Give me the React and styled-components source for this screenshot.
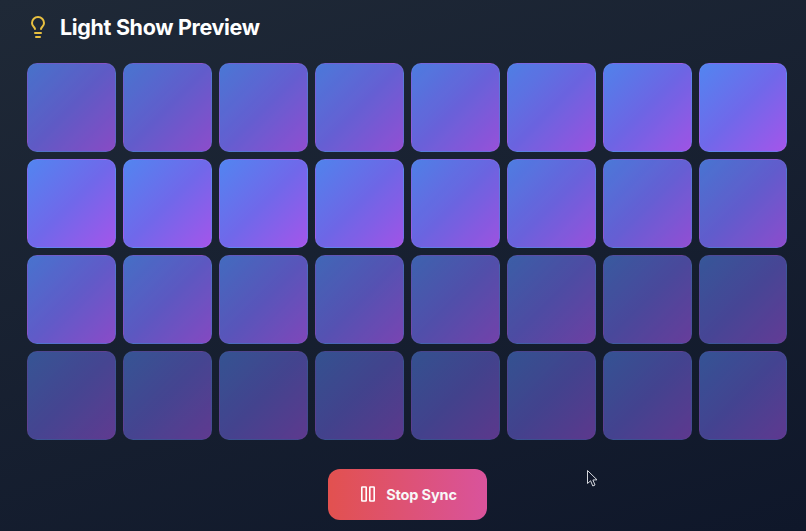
import React from 'react';
import styled, { createGlobalStyle } from 'styled-components';
import { Lightbulb } from 'lucide-react';

const Global = createGlobalStyle`
  html, body { margin: 0; padding: 0; height: 100%; background: #0f172a; }
  #root { height: 100%; }
`;

const Page = styled.main`
  position: relative;
  width: 806px;
  height: 531px;
  overflow: hidden;
  box-sizing: border-box;
  padding: 12px 18px 11px 27px;
  display: flex;
  flex-direction: column;
  background: linear-gradient(162deg, #1f2937 0%, #0f172a 100%);
  font-family: Inter, "Liberation Sans", sans-serif;
`;

const Header = styled.header`
  display: flex;
  align-items: center;
  gap: 10px;
  height: 30px;
  margin-bottom: 21px;
  color: #e8c040;
`;

const BulbIcon = styled(Lightbulb)`
  margin-left: -1px;
`;

const Title = styled.h1`
  margin: 0;
  font-size: 21.5px;
  line-height: 30px;
  font-weight: 700;
  letter-spacing: -0.34px;
  color: #ffffff;
`;

const Grid = styled.div`
  display: grid;
  grid-template-columns: repeat(8, 88.6px);
  grid-auto-rows: 88.6px;
  gap: 7.4px;
`;

const Tile = styled.div`
  box-sizing: border-box;
  border-radius: 10px;
  border: 1px solid rgba(255, 255, 255, 0.05);
  background: linear-gradient(135deg, #5285f0 0%, #7068ea 50%, #a455ea 100%);
`;

const Footer = styled.footer`
  display: flex;
  justify-content: center;
  margin-top: 29px;
`;

const SyncButton = styled.button`
  width: 159px;
  height: 51px;
  border: 0;
  border-radius: 12px;
  display: flex;
  align-items: center;
  justify-content: center;
  gap: 11px;
  padding: 0 0 0 3px;
  background: linear-gradient(90deg, #e2514f 0%, #d9539c 100%);
  color: #f8f8f8;
  font-family: inherit;
  font-size: 14.5px;
  font-weight: 700;
  letter-spacing: -0.15px;
`;

const Cursor = styled.svg`
  position: absolute;
  left: 586px;
  top: 469px;
`;

const levels = [
  0.8, 0.83, 0.86, 0.88, 0.91, 0.94, 0.97, 1,
  1, 1, 1, 0.98, 0.95, 0.92, 0.88, 0.84,
  0.82, 0.78, 0.74, 0.7, 0.66, 0.62, 0.58, 0.55,
  0.52, 0.52, 0.51, 0.5, 0.5, 0.51, 0.52, 0.53,
];

export default function App() {
  return (
    <Page>
      <Global />
      <Header>
        <BulbIcon size={24} strokeWidth={2} />
        <Title>Light Show Preview</Title>
      </Header>
      <Grid>
        {levels.map((o, i) => (
          <Tile key={i} style={{ opacity: o }} />
        ))}
      </Grid>
      <Footer>
        <SyncButton>
          <svg width="14" height="16" viewBox="0 0 14 16" fill="none" stroke="#fff" strokeWidth="1.6">
            <rect x="0.8" y="1" width="4.4" height="14" rx="0.5" />
            <rect x="8.8" y="1" width="4.4" height="14" rx="0.5" />
          </svg>
          Stop Sync
        </SyncButton>
      </Footer>
      <Cursor width="13" height="19" viewBox="0 0 13 19">
        <path d="M1.5 1.5 L1.5 14.5 L4.6 11.8 L6.8 17 L9 16 L6.9 11 L11 10.8 Z" fill="#10172a" stroke="#d5d8de" strokeWidth="1" strokeLinejoin="round" />
      </Cursor>
    </Page>
  );
}
